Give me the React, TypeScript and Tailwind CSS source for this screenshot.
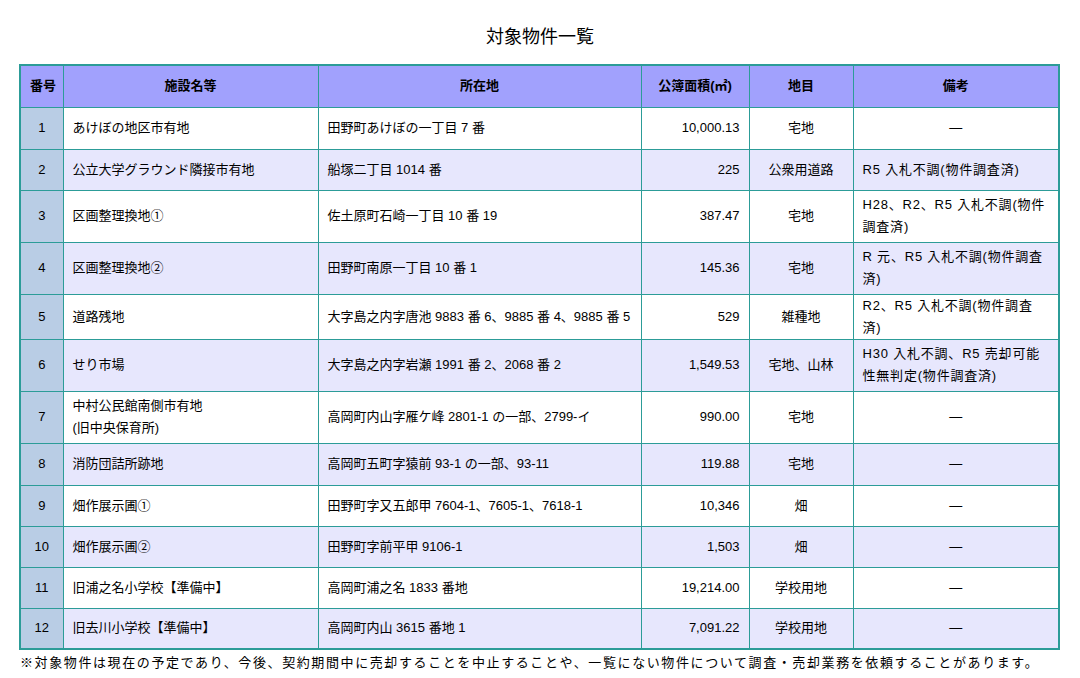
const rows: [string, string, string, string, string, string][] = [
  ['1', 'あけぼの地区市有地', '田野町あけぼの一丁目 7 番', '10,000.13', '宅地', '―'],
  ['2', '公立大学グラウンド隣接市有地', '船塚二丁目 1014 番', '225', '公衆用道路', 'R5 入札不調(物件調査済)'],
  ['3', '区画整理換地①', '佐土原町石崎一丁目 10 番 19', '387.47', '宅地', 'H28、R2、R5 入札不調(物件調査済)'],
  ['4', '区画整理換地②', '田野町南原一丁目 10 番 1', '145.36', '宅地', 'R 元、R5 入札不調(物件調査済)'],
  ['5', '道路残地', '大字島之内字唐池 9883 番 6、9885 番 4、9885 番 5', '529', '雑種地', 'R2、R5 入札不調(物件調査済)'],
  ['6', 'せり市場', '大字島之内字岩瀬 1991 番 2、2068 番 2', '1,549.53', '宅地、山林', 'H30 入札不調、R5 売却可能性無判定(物件調査済)'],
  ['7', '中村公民館南側市有地\n(旧中央保育所)', '高岡町内山字雁ケ峰 2801-1 の一部、2799-イ', '990.00', '宅地', '―'],
  ['8', '消防団詰所跡地', '高岡町五町字猿前 93-1 の一部、93-11', '119.88', '宅地', '―'],
  ['9', '畑作展示圃①', '田野町字又五郎甲 7604-1、7605-1、7618-1', '10,346', '畑', '―'],
  ['10', '畑作展示圃②', '田野町字前平甲 9106-1', '1,503', '畑', '―'],
  ['11', '旧浦之名小学校【準備中】', '高岡町浦之名 1833 番地', '19,214.00', '学校用地', '―'],
  ['12', '旧去川小学校【準備中】', '高岡町内山 3615 番地 1', '7,091.22', '学校用地', '―'],
];

const heights = ['h-[42px]', 'h-[41px]', 'h-[52px]', 'h-[52px]', 'h-[41px]', 'h-[52px]', 'h-[52px]', 'h-[42px]', 'h-[41px]', 'h-[41px]', 'h-[41px]', 'h-[41px]'];

export default function App() {
  const cell = 'border border-[#2c9c98] px-[9px] leading-[22px]';
  return (
    <div className="w-[1080px] h-[678px] bg-white text-[13px] text-black" style={{ fontFamily: '"Liberation Sans", "Noto Sans CJK JP", sans-serif' }}>
      <h1 className="pt-[24px] h-[64px] text-center text-[18px]">対象物件一覧</h1>
      <table className="ml-[19px] w-[1041px] table-fixed border-collapse border-2 border-[#2c9c98]">
        <colgroup>
          <col className="w-[43px]" />
          <col className="w-[255px]" />
          <col className="w-[323px]" />
          <col className="w-[108px]" />
          <col className="w-[104px]" />
          <col />
        </colgroup>
        <thead>
          <tr className="h-[42px] bg-[#a1a1fd] font-bold">
            {['番号', '施設名等', '所在地', '公簿面積(㎡)', '地目', '備考'].map((h, i) => (
              <th key={h} className={`${cell} text-center whitespace-nowrap ${i === 0 ? 'px-0' : ''}`}>{h}</th>
            ))}
          </tr>
        </thead>
        <tbody>
          {rows.map((r, i) => (
            <tr key={r[0]} className={`${heights[i]} ${i % 2 === 0 ? 'bg-white' : 'bg-[#e7e7fd]'}`}>
              <td className={`${cell} px-0 text-center bg-[#b9cde5]`}>{r[0]}</td>
              <td className={`${cell} whitespace-pre-line`}>{r[1]}</td>
              <td className={cell}>{r[2]}</td>
              <td className={`${cell} text-right`}>{r[3]}</td>
              <td className={`${cell} text-center`}>{r[4]}</td>
              <td className={`${cell} ${r[5] === '―' ? 'text-center' : 'tracking-[0.8px]'}`}>{r[5]}</td>
            </tr>
          ))}
        </tbody>
      </table>
      <p className="mt-[3px] pl-[20px] text-[13px] tracking-[1.6px] whitespace-nowrap">※対象物件は現在の予定であり、今後、契約期間中に売却することを中止することや、一覧にない物件について調査・売却業務を依頼することがあります。</p>
    </div>
  );
}
